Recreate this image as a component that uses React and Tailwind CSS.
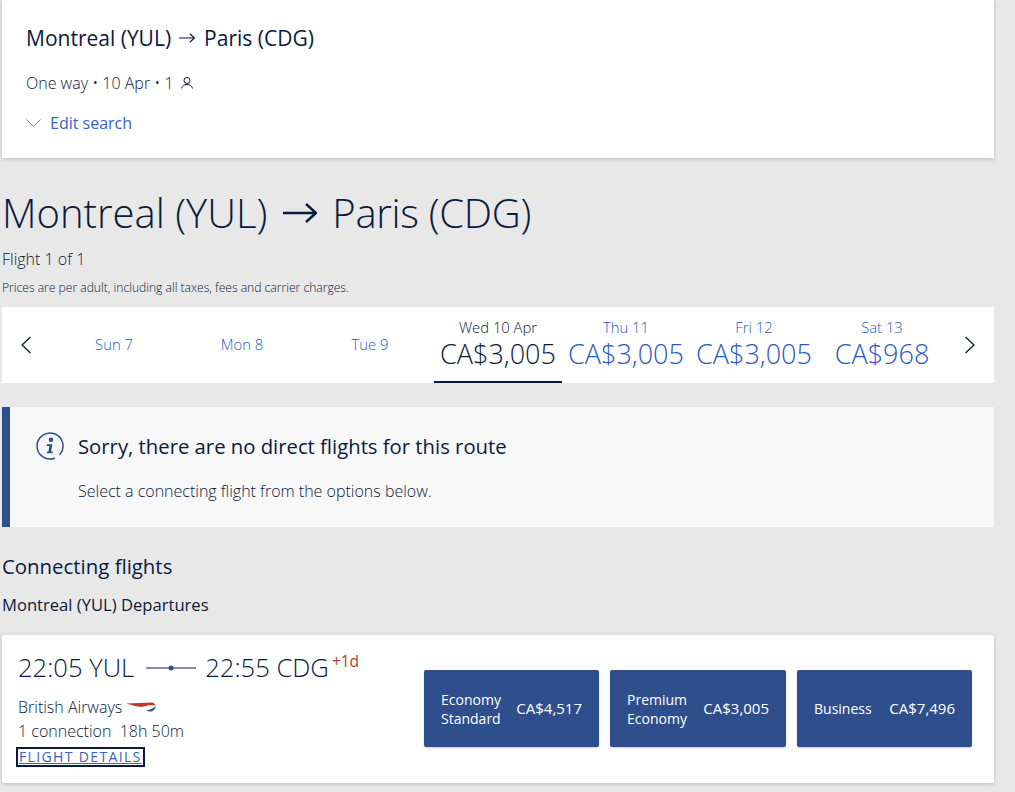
const dates = [
  { label: 'Sun 7' },
  { label: 'Mon 8' },
  { label: 'Tue 9' },
  { label: 'Wed 10 Apr', price: 'CA$3,005', active: true },
  { label: 'Thu 11', price: 'CA$3,005' },
  { label: 'Fri 12', price: 'CA$3,005' },
  { label: 'Sat 13', price: 'CA$968' },
]

const fares = [
  { cabin: ['Economy', 'Standard'], price: 'CA$4,517', width: 'w-[175px]' },
  { cabin: ['Premium', 'Economy'], price: 'CA$3,005', width: 'w-[176px]' },
  { cabin: ['Business'], price: 'CA$7,496', width: 'w-[175px]' },
]

function Arrow({ className, width, height, stroke }) {
  return (
    <svg className={className} width={width} height={height} viewBox="0 0 34 20" fill="none" stroke="#0a1a40" strokeWidth={stroke}>
      <path d="M0 10h32M23 1l10 9-10 9" />
    </svg>
  )
}

function PersonIcon() {
  return (
    <svg width="14" height="14" viewBox="0 0 14 14" fill="none" stroke="#0a1a40" strokeWidth="1">
      <circle cx="7" cy="4.500" r="3" />
      <path d="M1.500 12.500c.5-2.600 2.600-4 5.500-4s5 1.400 5.500 4" />
    </svg>
  )
}

function InfoIcon() {
  return (
    <svg width="30" height="30" viewBox="0 0 30 30" fill="none">
      <path d="M24.960 23.360A13 13 0 1 0 19.450 27.200" stroke="#2f4f8c" strokeWidth="1.500" strokeLinecap="round" />
      <circle cx="16" cy="8.800" r="2.300" fill="#2f4f8c" />
      <path d="M12 13.200h5.400l-1.300 7.300h1.700l-.3 1.700h-5.600l.3-1.700h1.200l1-5.600h-2.700z" fill="#2f4f8c" />
    </svg>
  )
}

function SpeedMarque() {
  return (
    <svg width="31" height="10" viewBox="0 0 31 10">
      <path d="M0 1.500 27 .5 30 3.500C24 3 20 3.500 16 5 10 4.500 5 3 0 1.500z" fill="#c0392b" />
      <path d="M20 8.500c3.500-.3 7-2 10-4.500-.5 3-3 5.500-5.500 5.500-1.500 0-3-.3-4.500-1z" fill="#2f4f8c" />
    </svg>
  )
}

function SideChevron({ dir }) {
  return (
    <svg width="12" height="18" viewBox="0 0 12 18" fill="none" stroke="#0a1a40" strokeWidth="1.300">
      <path d={dir === 'left' ? 'M10.500 1 2 9l8.500 8' : 'M1.500 1 10 9l-8.500 8'} />
    </svg>
  )
}

export default function App() {
  return (
    <div className="h-[792px] overflow-hidden bg-[#e8e8e8] pl-[2px] pr-[21px] font-['Open_Sans',sans-serif] font-light text-[#0a1a40]">
      {/* search summary */}
      <div className="h-[158px] bg-white pl-6 pt-[21px] shadow-[0_1px_4px_rgba(0,0,0,0.2)]">
        <div className="flex items-center text-[21px] leading-[34px] font-normal">
          <span>Montreal (YUL)</span>
          <Arrow className="ml-[8px] mr-[9px]" width={16} height={10} stroke={2.400} />
          <span>Paris (CDG)</span>
        </div>
        <div className="mt-4 flex h-[24px] items-center gap-[6px] text-[16px]">
          <span>One way • 10 Apr • 1</span>
          <PersonIcon />
        </div>
        <div className="mt-4 flex h-6 items-center gap-[9px] text-[16px] font-normal text-[#3563c9]">
          <svg width="15" height="8" viewBox="0 0 15 8" fill="none" stroke="#3563c9" strokeWidth="0.800">
            <path d="M.5.5l7 7 7-7" />
          </svg>
          <span>Edit search</span>
        </div>
      </div>

      <h1 className="mt-[28px] flex items-center text-[40px] leading-[54px]">
        <span>Montreal (YUL)</span>
        <Arrow className="ml-[16px] mr-[15px]" width={34} height={20} stroke={2.400} />
        <span className="tracking-[-0.300px]">Paris (CDG)</span>
      </h1>
      <div className="mt-[8px] text-[16px] leading-[22px]">Flight 1 of 1</div>
      <div className="mt-[10px] text-[12.100px] leading-[16px]">Prices are per adult, including all taxes, fees and carrier charges.</div>

      {/* date strip */}
      <div className="mt-[11px] flex h-[76px] bg-white">
        <div className="flex w-12 items-center justify-center">
          <SideChevron dir="left" />
        </div>
        {dates.map((d) => (
          <div
            key={d.label}
            className={`flex w-[128px] flex-col items-center justify-center border-b-2 ${d.active ? 'border-[#0a1a40] text-[#0a1a40]' : 'border-transparent text-[#2a58c4]'}`}
          >
            <div className="text-[14.800px] leading-[20px]">{d.label}</div>
            {d.price && <div className="whitespace-nowrap text-[27px] leading-[34px]">{d.price}</div>}
          </div>
        ))}
        <div className="flex w-12 items-center justify-center">
          <SideChevron dir="right" />
        </div>
      </div>

      {/* no direct flights notice */}
      <div className="mt-6 h-[120px] border-l-8 border-[#2f4f8c] bg-[#f8f8f8] pl-[25px] pt-[24px]">
        <div className="flex items-center gap-[13px]">
          <InfoIcon />
          <div className="text-[20.300px] leading-[30px] font-normal">Sorry, there are no direct flights for this route</div>
        </div>
        <div className="mt-[18px] pl-[43px] text-[16px] leading-[24px]">Select a connecting flight from the options below.</div>
      </div>

      <h2 className="mt-[25px] text-[20.400px] leading-[28px] font-normal">Connecting flights</h2>
      <div className="mt-[14px] text-[16.600px] leading-[22px] font-normal">Montreal (YUL) Departures</div>

      {/* flight result */}
      <div className="mt-[19px] flex h-[148px] justify-between rounded-[2px] bg-white pl-[16px] pr-[22px] shadow-[0_1px_4px_rgba(0,0,0,0.2)]">
        <div>
          <div className="mt-[15px] flex h-[36px] items-center text-[25.600px] whitespace-nowrap">
            <span>22:05 YUL</span>
            <svg className="ml-[12px] mr-[9px]" width="50" height="8" viewBox="0 0 50 8">
              <path d="M0 4h50" stroke="#0a1a40" strokeWidth="1" />
              <circle cx="25" cy="4" r="2.500" fill="#2f4f8c" />
            </svg>
            <span>22:55 CDG</span>
            <span className="relative -top-[6px] ml-[3px] text-[15.500px] font-normal text-[#c0392b]">+1d</span>
          </div>
          <div className="mt-[9px] flex h-[24px] items-center gap-[4px] text-[16px]">
            <span>British Airways</span>
            <SpeedMarque />
          </div>
          <div className="text-[16px] leading-[24px]">1 connection&nbsp; 18h 50m</div>
          <div className="-ml-[2px] mt-[4px] inline-block border-2 border-[#0a1a40] px-[1px] text-[14px] leading-[16px] tracking-[1.350px] font-normal text-[#3563c9] underline">
            FLIGHT DETAILS
          </div>
        </div>
        <div className="mt-[35px] flex h-[77px] gap-[11px]">
          {fares.map((f) => (
            <div
              key={f.price}
              className={`flex ${f.width} items-center justify-between rounded-[2px] bg-[#2f4f8c] px-[17px] text-[14px] leading-[19px] font-normal text-white shadow-[0_1px_2px_rgba(0,0,0,0.2)]`}
            >
              <div>
                {f.cabin.map((line) => (
                  <div key={line}>{line}</div>
                ))}
              </div>
              <div className="text-[15px]">{f.price}</div>
            </div>
          ))}
        </div>
      </div>
    </div>
  )
}
